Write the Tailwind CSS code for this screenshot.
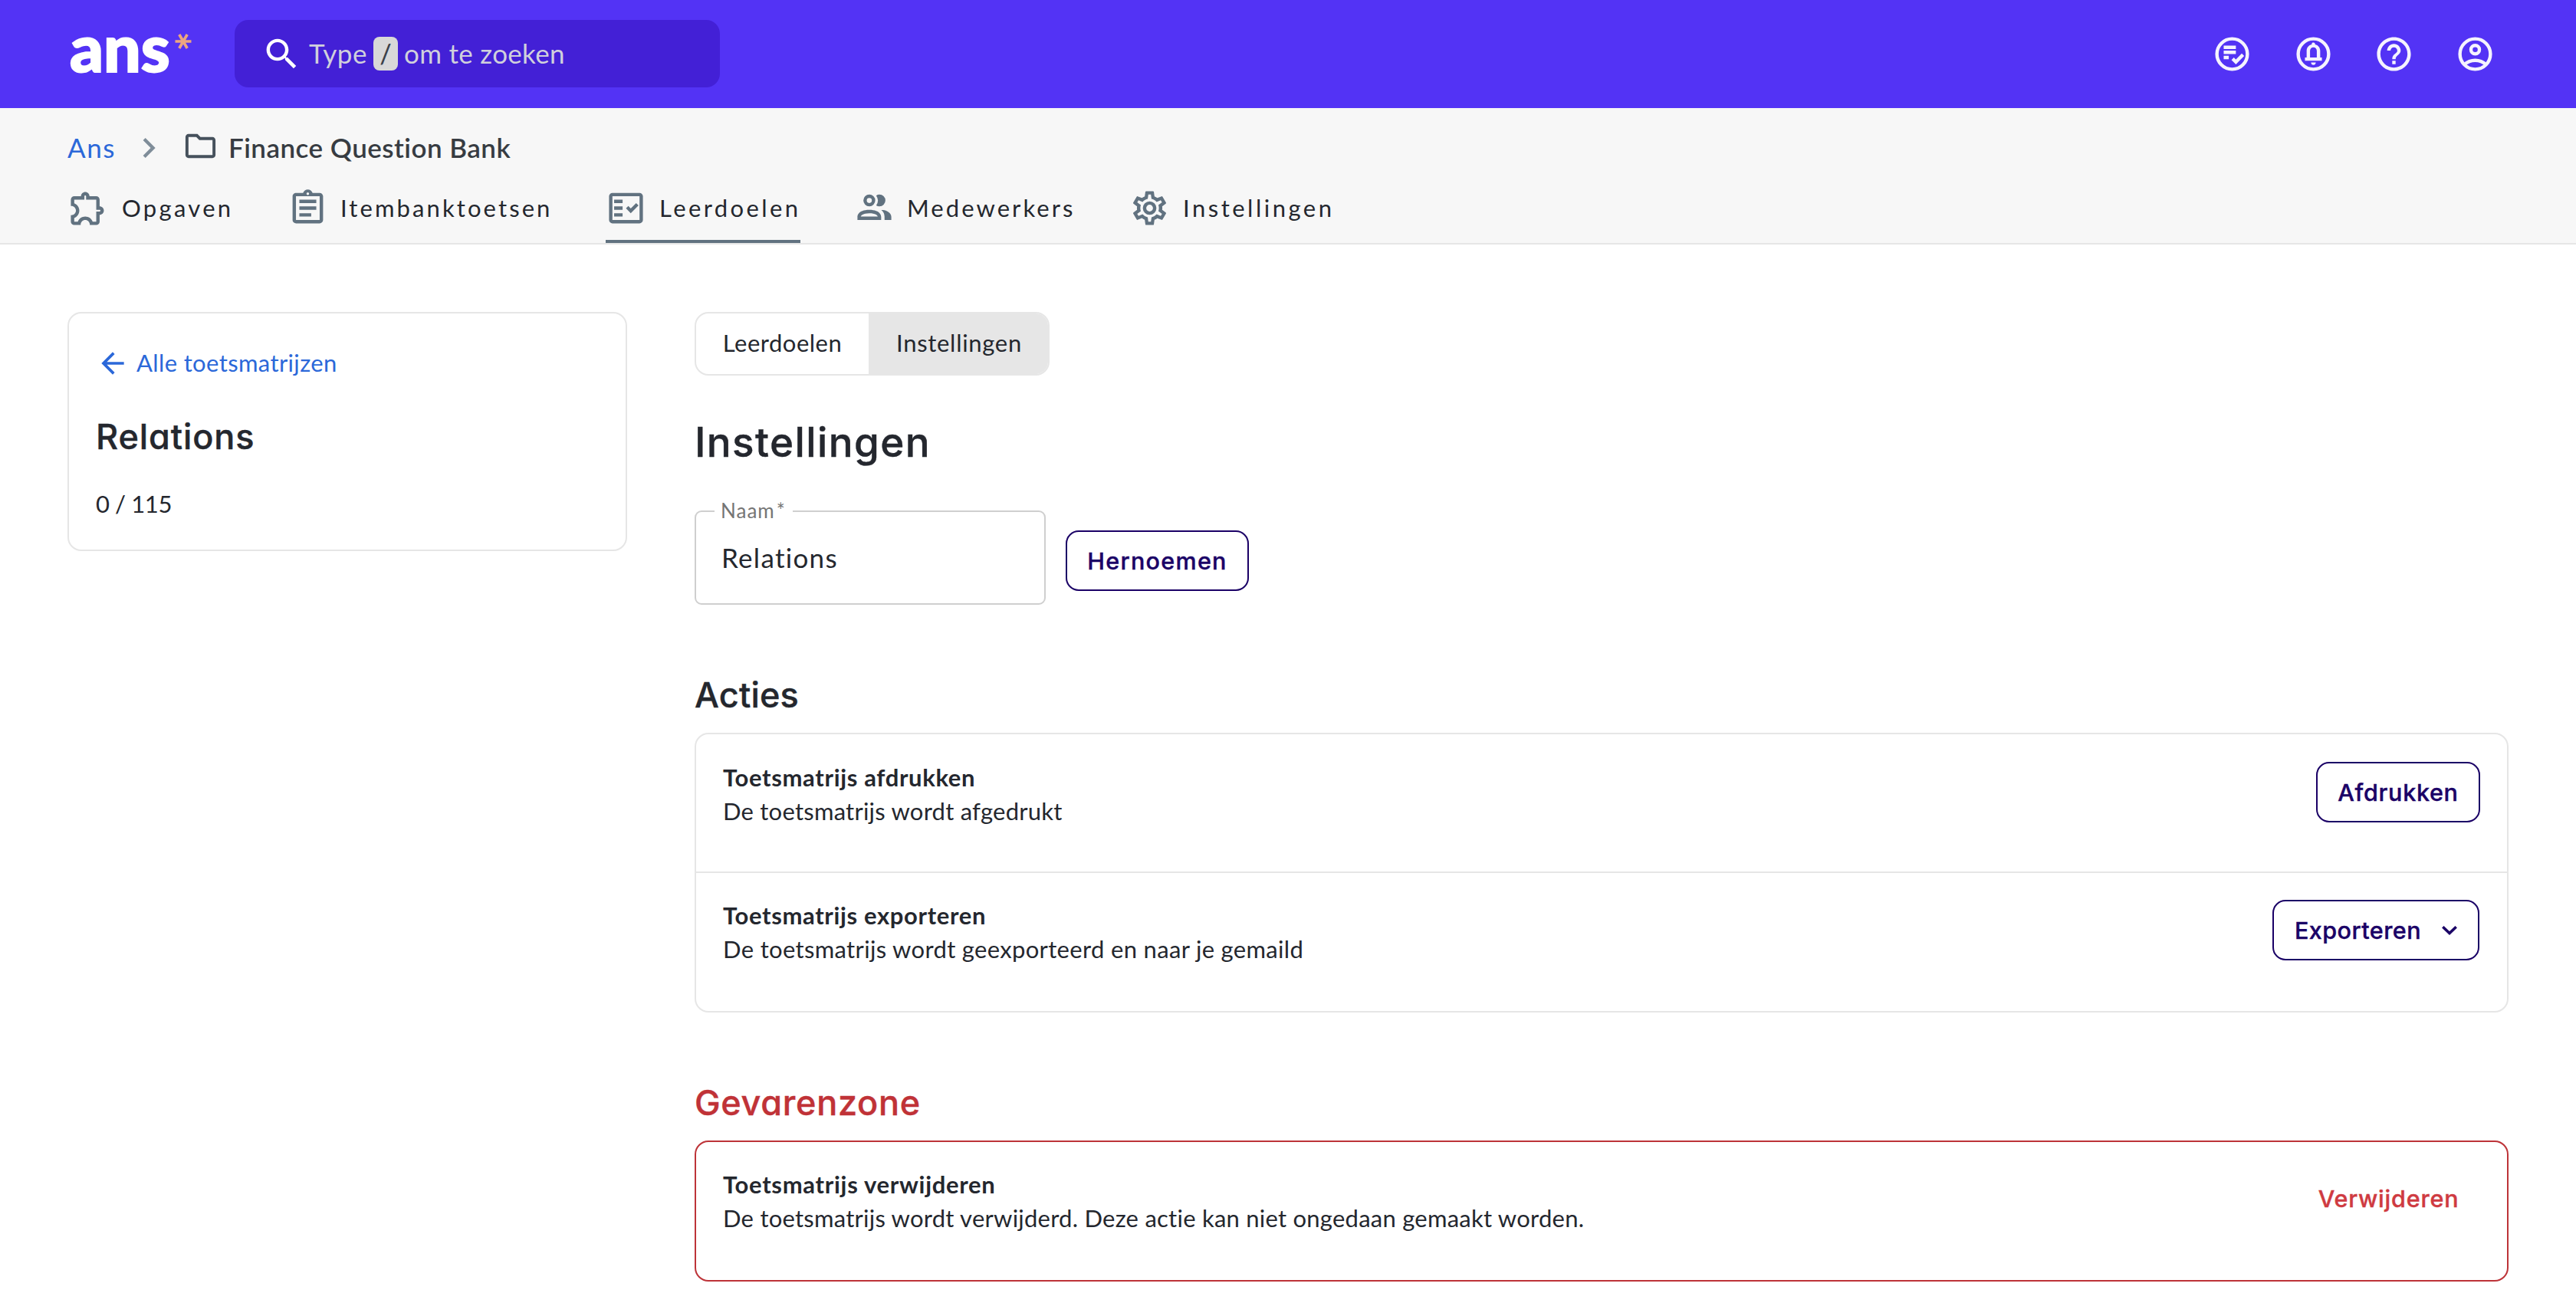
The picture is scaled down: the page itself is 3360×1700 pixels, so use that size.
<!DOCTYPE html>
<html lang="nl">
<head>
  <meta charset="UTF-8" />
  <meta name="viewport" content="width=device-width, initial-scale=1" />
  <title>Relations - Instellingen - Ans</title>
  <script src="https://cdn.jsdelivr.net/npm/@tailwindcss/browser@4"></script>
  <style>
    body { font-family: Lato, "Open Sans", sans-serif; }
    .heading {
      font-family: Inter, "Open Sans", sans-serif;
      font-feature-settings: "cv11";
      font-weight: 500;
      -webkit-text-stroke: 0.4px currentColor;
    }
  </style>
</head>
<body class="bg-white text-[#24272e] text-[31px] leading-[44px] h-[1700px] overflow-hidden">

  <!-- Top bar -->
  <header class="h-[141px] bg-[#5333f5] flex items-center pl-[91px] pr-[105px]">
    <a class="w-[215px] flex items-center">
      <span class="w-[137px] pb-[20px] text-[86px] leading-[100px] font-black text-white [-webkit-text-stroke:2px_white]">ans</span>
      <svg class="w-[22px] h-[20px] mb-[34px]" viewBox="0 0 22 20" fill="none" stroke="#eda680" stroke-width="3.6"><path d="M0.5 10h21M5.8 1l10.4 18M16.2 1L5.8 19" /></svg>
    </a>
    <div class="w-[633px] h-[88px] mb-px rounded-[18px] bg-[#4320d6] flex items-center pl-[35px] text-[35px] text-[#d0d0dc]">
      <svg class="w-[53px] h-[53px]" viewBox="0 0 24 24" fill="#fff"><path d="M15.5 14h-.79l-.28-.27C15.41 12.59 16 11.11 16 9.5 16 5.91 13.09 3 9.5 3S3 5.91 3 9.5 5.91 16 9.5 16c1.61 0 3.09-.59 4.23-1.57l.27.28v.79l5 4.99L20.49 19l-4.99-5zm-6 0C7.01 14 5 11.99 5 9.5S7.01 5 9.5 5 14 7.01 14 9.5 11.99 14 9.5 14z" /></svg>
      <span class="ml-[9px] w-[84px] pb-[3px] tracking-[0.57px]">Type</span>
      <span class="w-[32px] h-[44px] rounded-[8px] bg-[#d8d8d8] text-[#3b4149] flex items-center justify-center text-[34px] font-medium">/</span>
      <span class="ml-[8px] pb-[3px] tracking-[0.31px]">om te zoeken</span>
    </div>
    <div class="ml-auto flex gap-[52.6px]">
      <svg class="w-[53px] h-[53px]" viewBox="0 0 24 24" fill="none" stroke="#f5f3fe" stroke-width="2"><circle cx="12" cy="12" r="9" /><path d="M7 8h7.2M7 11h7.2M7 14h3M12.3 14.8l1.9 1.9 4.2-4.3" /></svg>
      <svg class="w-[53px] h-[53px]" viewBox="0 0 24 24" fill="#f5f3fe"><circle cx="12" cy="12" r="9" fill="none" stroke="#f5f3fe" stroke-width="2" /><path fill-rule="evenodd" d="M7 16v-2h1v-3.9c0-1.9 1.2-3.4 3-3.8v-.1c0-.8.4-1 1-1s1 .3 1 1v.1c1.8.4 3 1.9 3 3.8V14h1v2H7zm3-2h4v-3.9c0-1.2-.9-2.1-2-2.1s-2 .9-2 2.1V14zM10.6 17h2.8c0 .9-.6 1.5-1.4 1.5s-1.4-.6-1.4-1.5z" /></svg>
      <svg class="w-[53px] h-[53px]" viewBox="0 0 24 24" fill="#f5f3fe"><path d="M11 18h2v-2h-2v2zm1-16C6.48 2 2 6.48 2 12s4.48 10 10 10 10-4.48 10-10S17.52 2 12 2zm0 18c-4.41 0-8-3.59-8-8s3.59-8 8-8 8 3.59 8 8-3.59 8-8 8zm0-14c-2.21 0-4 1.79-4 4h2c0-1.1.9-2 2-2s2 .9 2 2c0 2-3 1.75-3 5h2c0-2.25 3-2.5 3-5 0-2.21-1.79-4-4-4z" /></svg>
      <svg class="w-[53px] h-[53px]" viewBox="0 0 24 24" fill="none" stroke="#f5f3fe" stroke-width="2"><circle cx="12" cy="12" r="9" /><circle cx="12" cy="9.4" r="2.5" /><path d="M5.6 18.2c3.6-3.3 9.2-3.3 12.8 0" /></svg>
    </div>
  </header>

  <!-- Breadcrumb and tabs -->
  <div class="h-[178px] bg-[#f7f7f7] border-b-2 border-[#e6e6e6] pl-[88px] pt-[25px]">
    <div class="h-[51px] flex items-center text-[35px]">
      <a class="w-[80px] text-[#2b68d9] tracking-[1.6px]">Ans</a>
      <svg class="w-[52px] h-[52px] mt-[3px]" viewBox="0 0 24 24" fill="#7f8d99"><path d="M10 6L8.59 7.41 13.17 12l-4.58 4.59L10 18l6-6z" /></svg>
      <svg class="w-[47px] h-[47px] ml-[18px] mb-[3px]" viewBox="0 0 24 24" fill="#46515c"><path d="M9.17 6l2 2H20v10H4V6h5.17M10 4H4c-1.1 0-1.99.9-1.99 2L2 18c0 1.1.9 2 2 2h16c1.1 0 2-.9 2-2V8c0-1.1-.9-2-2-2h-8l-2-2z" /></svg>
      <span class="ml-[13px] font-semibold text-[#373c42] tracking-[0.47px]">Finance Question Bank</span>
    </div>
    <nav class="flex gap-[70px]">
      <a class="w-[217px] h-[100px] pt-[12px] border-b-4 border-transparent flex items-center gap-[18px] tracking-[3.3px]">
        <svg class="w-[53px] h-[53px] shrink-0" viewBox="0 0 24 24" fill="#617280"><path d="M10.5 4.5c.28 0 .5.22.5.5v2h6v6h2c.28 0 .5.22.5.5s-.22.5-.5.5h-2v6h-2.12c-.68-1.75-2.39-3-4.38-3s-3.7 1.25-4.38 3H4v-2.12c1.75-.68 3-2.39 3-4.38 0-1.99-1.24-3.7-2.99-4.38L4 7h6V5c0-.28.22-.5.5-.5m0-2C9.12 2.5 8 3.62 8 5H4c-1.1 0-1.99.9-1.99 2v3.8h.29c1.49 0 2.7 1.21 2.7 2.7s-1.21 2.7-2.7 2.7H2V20c0 1.1.9 2 2 2h3.8v-.3c0-1.49 1.21-2.7 2.7-2.7s2.7 1.21 2.7 2.7v.3H17c1.1 0 2-.9 2-2v-4c1.38 0 2.5-1.12 2.5-2.5S20.38 11 19 11V7c0-1.1-.9-2-2-2h-4c0-1.38-1.12-2.5-2.5-2.5z" /></svg>
        Opgaven
      </a>
      <a class="w-[345px] h-[100px] pt-[12px] border-b-4 border-transparent flex items-center gap-4 tracking-[3.1px]">
        <svg class="w-[53px] h-[53px] shrink-0" viewBox="0 0 24 24" fill="#617280"><path d="M7 15h7v2H7zm0-4h10v2H7zm0-4h10v2H7zm12-4h-4.18C14.4 1.84 13.3 1 12 1c-1.3 0-2.4.84-2.82 2H5c-.14 0-.27.01-.4.04-.39.08-.74.28-1.01.55-.18.18-.33.4-.43.64-.1.23-.16.49-.16.77v14c0 .27.06.54.16.78s.25.45.43.64c.27.27.62.47 1.01.55.13.02.26.03.4.03h14c1.1 0 2-.9 2-2V5c0-1.1-.9-2-2-2zm-7-.25c.41 0 .75.34.75.75s-.34.75-.75.75-.75-.34-.75-.75.34-.75.75-.75zM19 19H5V5h14v14z" /></svg>
        Itembanktoetsen
      </a>
      <a class="w-[254px] h-[100px] pt-[12px] border-b-4 border-[#617280] flex items-center gap-[17px] tracking-[3.4px]">
        <svg class="w-[53px] h-[53px] shrink-0" viewBox="0 0 24 24" fill="#617280"><path d="M20 3H4c-1.1 0-2 .9-2 2v14c0 1.1.9 2 2 2h16c1.1 0 2-.9 2-2V5c0-1.1-.9-2-2-2zm0 16H4V5h16v14zM19.41 10.42L17.99 9l-3.17 3.17-1.41-1.42L12 12.16 14.82 15zM5 7h5v2H5zM5 11h5v2H5zM5 15h5v2H5z" /></svg>
        Leerdoelen
      </a>
      <a class="w-[289px] h-[100px] pt-[12px] border-b-4 border-transparent flex items-center gap-4 tracking-[3.05px]">
        <svg class="w-[53px] h-[53px] shrink-0" viewBox="0 0 24 24" fill="#617280"><path d="M13.07 10.41A5 5 0 0 0 13.07 4.59A3.39 3.39 0 0 1 15 4A3.5 3.5 0 0 1 15 11A3.39 3.39 0 0 1 13.07 10.41M5.5 7.5A3.5 3.5 0 1 1 9 11A3.5 3.5 0 0 1 5.5 7.5M7.5 7.5A1.5 1.5 0 1 0 9 6A1.5 1.5 0 0 0 7.5 7.5M16 17V19H2V17S2 13 9 13 16 17 16 17M14 17C13.86 16.22 12.67 15 9 15S4.07 16.31 4 17M15.95 13A5.32 5.32 0 0 1 18 17V19H22V17S22 13.37 15.94 13Z" /></svg>
        Medewerkers
      </a>
      <a class="h-[100px] pt-[12px] border-b-4 border-transparent flex items-center gap-[17px] tracking-[3.5px]">
        <svg class="w-[53px] h-[53px] shrink-0" viewBox="0 0 24 24" fill="#617280"><path d="M12,8A4,4 0 0,1 16,12A4,4 0 0,1 12,16A4,4 0 0,1 8,12A4,4 0 0,1 12,8M12,10A2,2 0 0,0 10,12A2,2 0 0,0 12,14A2,2 0 0,0 14,12A2,2 0 0,0 12,10M10,22C9.75,22 9.54,21.82 9.5,21.58L9.13,18.93C8.5,18.68 7.96,18.34 7.44,17.94L4.95,18.95C4.73,19.03 4.46,18.95 4.34,18.73L2.34,15.27C2.21,15.05 2.27,14.78 2.46,14.63L4.57,12.97L4.5,12L4.57,11L2.46,9.37C2.27,9.22 2.21,8.95 2.34,8.73L4.34,5.27C4.46,5.05 4.73,4.96 4.95,5.05L7.44,6.05C7.96,5.66 8.5,5.32 9.13,5.07L9.5,2.42C9.54,2.18 9.75,2 10,2H14C14.25,2 14.46,2.18 14.5,2.42L14.87,5.07C15.5,5.32 16.04,5.66 16.56,6.05L19.05,5.05C19.27,4.96 19.54,5.05 19.66,5.27L21.66,8.73C21.79,8.95 21.73,9.22 21.54,9.37L19.43,11L19.5,12L19.43,13L21.54,14.63C21.73,14.78 21.79,15.05 21.66,15.27L19.66,18.73C19.54,18.95 19.27,19.04 19.05,18.95L16.56,17.95C16.04,18.34 15.5,18.68 14.87,18.93L14.5,21.58C14.46,21.82 14.25,22 14,22H10M11.25,4L10.88,6.61C9.68,6.86 8.62,7.5 7.85,8.39L5.44,7.35L4.69,8.65L6.8,10.2C6.4,11.37 6.4,12.64 6.8,13.8L4.68,15.36L5.43,16.66L7.86,15.62C8.63,16.5 9.68,17.14 10.87,17.38L11.24,20H12.76L13.13,17.39C14.32,17.14 15.37,16.5 16.14,15.62L18.57,16.66L19.32,15.36L17.2,13.81C17.6,12.64 17.6,11.37 17.2,10.2L19.31,8.65L18.56,7.35L16.15,8.39C15.38,7.5 14.32,6.86 13.12,6.62L12.75,4H11.25Z" /></svg>
        Instellingen
      </a>
    </nav>
  </div>

  <main class="flex items-start gap-[88px] pl-[88px] pt-[88px]">

    <!-- Sidebar card -->
    <aside class="w-[730px] h-[312px] shrink-0 border-2 border-[#e6e6e6] rounded-[18px] px-[35px] pt-[41px]">
      <a class="flex items-center text-[#2b68d9] tracking-[0.37px]">
        <svg class="w-[44px] h-[44px] mr-[9px] mt-[2px]" viewBox="0 0 24 24" fill="#2b68d9"><path d="M20 11H7.83l5.59-5.59L12 4l-8 8 8 8 1.41-1.41L7.83 13H20v-2z" /></svg>
        Alle toetsmatrijzen
      </a>
      <h2 class="heading mt-[44px] text-[45px] leading-[60px] tracking-[0.9px]">Relations</h2>
      <p class="mt-[35px] tracking-[-0.4px]">0 / 115</p>
    </aside>

    <section class="w-[2366px]">
      <div class="flex w-[463px] h-[83px] border-2 border-[#e6e6e6] rounded-[18px] overflow-hidden">
        <a class="w-[225px] pb-[4px] flex items-center justify-center tracking-[0.5px]">Leerdoelen</a>
        <a class="flex-1 pb-[4px] pl-[2px] flex items-center justify-center bg-[#e6e6e6] tracking-[0.7px]">Instellingen</a>
      </div>

      <h1 class="heading mt-[51px] text-[53px] leading-[72px] tracking-[1.4px]">Instellingen</h1>

      <div class="mt-[53px] flex gap-[26px]">
        <div class="relative w-[458px] h-[123px] border-2 border-[#cfcfcf] rounded-[9px] flex items-center pl-[33px] pb-[2px] text-[35px] tracking-[1.3px]">
          <label class="absolute left-[24px] top-[-17px] w-[102px] pl-[8px] bg-white text-[26px] leading-[30px] text-[#757575] tracking-[1px]">Naam<span class="ml-[2px]">*</span></label>
          Relations
        </div>
        <button class="heading mt-[26px] w-[239px] h-[79px] border-2 border-[#1a0066] rounded-[17px] text-[30.5px] text-[#1a0066] tracking-[1.3px]">Hernoemen</button>
      </div>

      <h2 class="heading mt-[88px] text-[45px] leading-[60px] tracking-[0.2px]">Acties</h2>
      <div class="mt-[19px] border-2 border-[#e6e6e6] rounded-[18px]">
        <div class="h-[181px] border-b-2 border-[#e6e6e6] flex justify-between items-start px-[35px] pt-[34px]">
          <div>
            <p class="font-bold tracking-[0.65px]">Toetsmatrijs afdrukken</p>
            <p class="tracking-[0.23px]">De toetsmatrijs wordt afgedrukt</p>
          </div>
          <button class="heading mt-[2px] w-[214px] h-[79px] border-2 border-[#1a0066] rounded-[17px] text-[30.5px] text-[#1a0066] tracking-[0.7px]">Afdrukken</button>
        </div>
        <div class="h-[180px] flex justify-between items-start pl-[35px] pr-[36px] pt-[33px]">
          <div>
            <p class="font-bold tracking-[0.64px]">Toetsmatrijs exporteren</p>
            <p class="tracking-[0.33px]">De toetsmatrijs wordt geexporteerd en naar je gemaild</p>
          </div>
          <button class="heading mt-[2px] w-[270px] h-[79px] border-2 border-[#1a0066] rounded-[17px] flex items-center justify-between px-[27px] text-[30.5px] text-[#1a0066] tracking-[0.45px]">
            Exporteren
            <svg class="w-[20px] h-[12px]" viewBox="0 0 20 12" fill="none" stroke="#1a0066" stroke-width="3.6"><path d="M1.3 1.3l8.7 8.2 8.7-8.2" /></svg>
          </button>
        </div>
      </div>

      <h2 class="heading mt-[88px] text-[45px] leading-[60px] text-[#c03237] tracking-[0.7px]">Gevarenzone</h2>
      <div class="mt-[19px] h-[184px] border-2 border-[#bd3338] rounded-[18px] flex justify-between items-start px-[35px] pt-[33px]">
        <div>
          <p class="font-bold tracking-[0.69px]">Toetsmatrijs verwijderen</p>
          <p class="tracking-[0.24px]">De toetsmatrijs wordt verwijderd. Deze actie kan niet ongedaan gemaakt worden.</p>
        </div>
        <button class="heading mt-[1px] w-[241px] h-[79px] pl-[2px] text-[30.5px] text-[#cf3a41] tracking-[0.8px]">Verwijderen</button>
      </div>
    </section>
  </main>

</body>
</html>
